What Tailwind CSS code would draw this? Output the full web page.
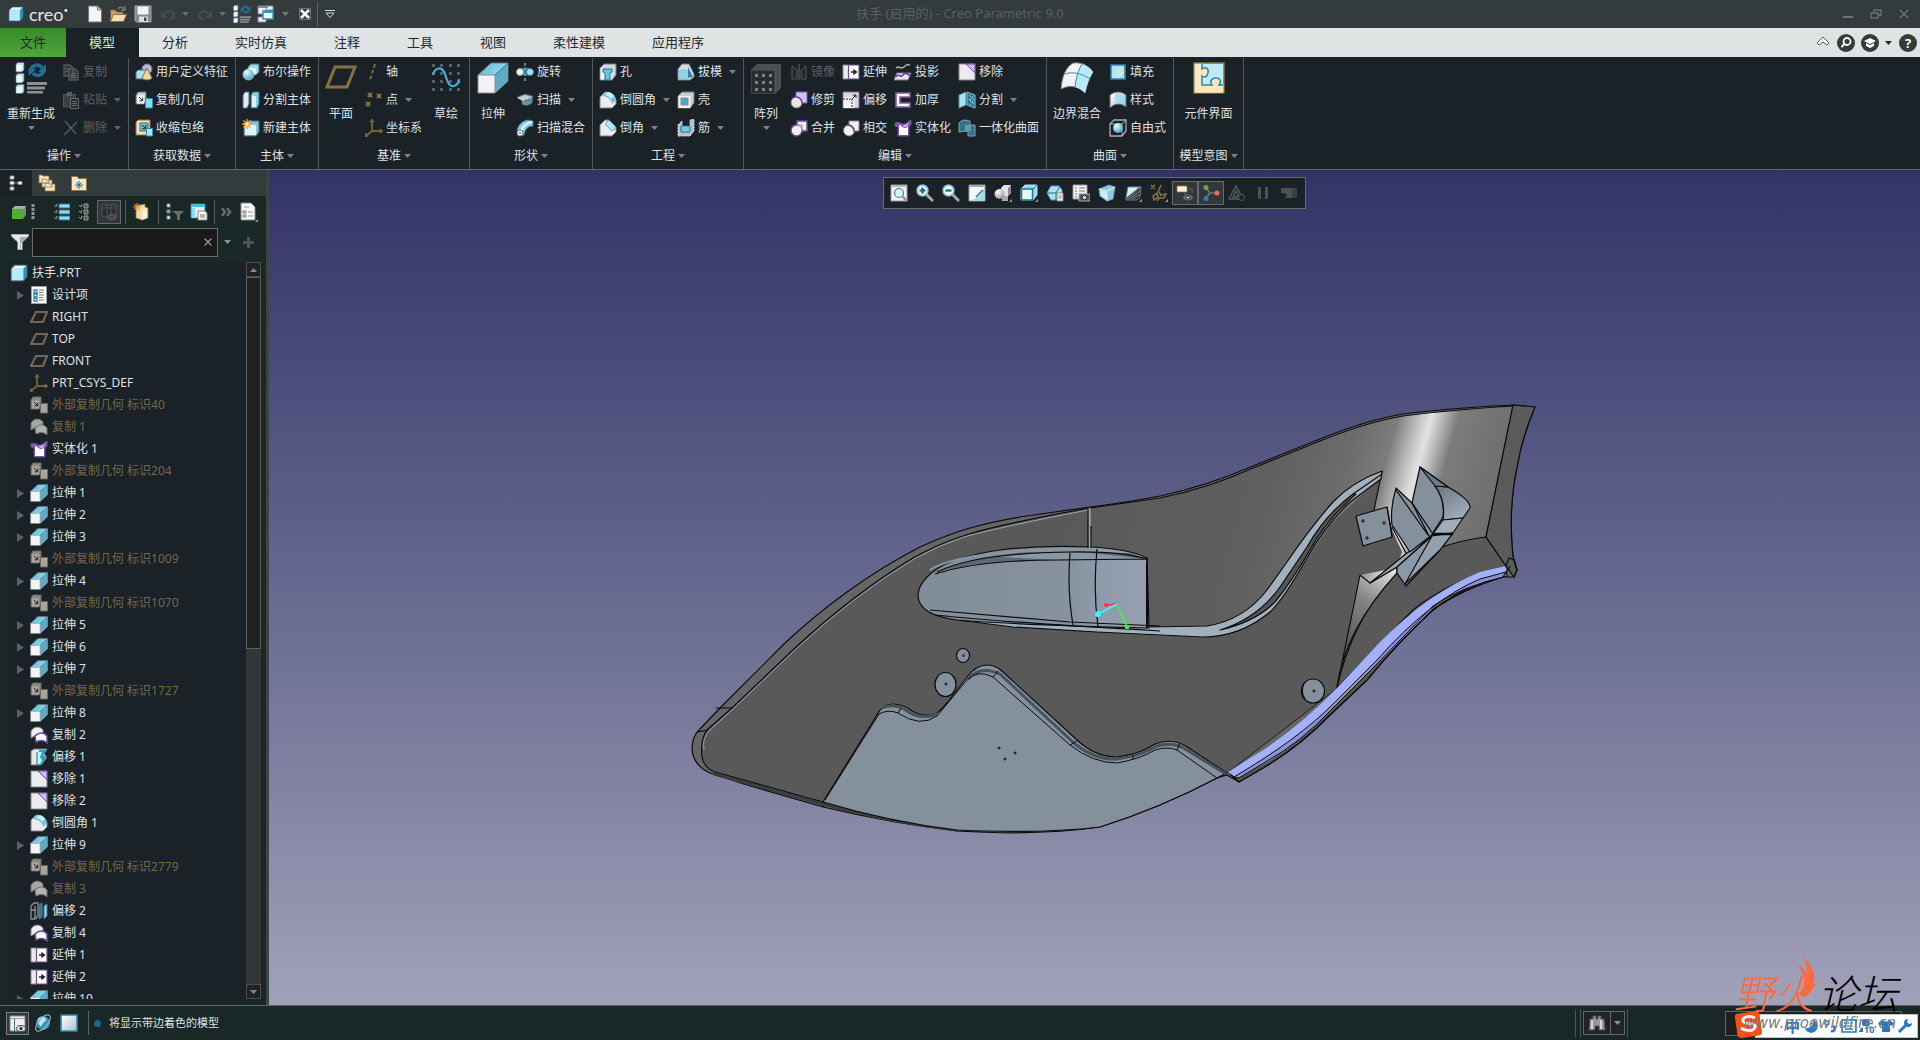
<!DOCTYPE html>
<html lang="zh-CN">
<head>
<meta charset="utf-8">
<meta name="viewport" content="width=device-width, initial-scale=1">
<title>扶手 (启用的) - Creo Parametric 9.0</title>
<script src="https://cdn.jsdelivr.net/npm/@tailwindcss/browser@4"></script>
</head>
<body class="flex h-screen flex-col overflow-hidden bg-[#192827] font-['Noto_Sans','Noto_Sans_CJK_SC',sans-serif] text-xs text-[#dfe2e3]">

<!-- Icon library -->
<svg class="absolute size-0" aria-hidden="true">
  <defs>
    <linearGradient id="gb" x1="0" y1="0" x2="1" y2="1"><stop offset="0" stop-color="#4db8dc"/><stop offset="1" stop-color="#d4f3fb"/></linearGradient>
    <linearGradient id="gw" x1="0" y1="0" x2="1" y2="1"><stop offset="0" stop-color="#fff"/><stop offset="1" stop-color="#a9c3cc"/></linearGradient>
    <radialGradient id="gs" cx=".35" cy=".3" r=".8"><stop offset="0" stop-color="#fff"/><stop offset="1" stop-color="#909090"/></radialGradient>
    <radialGradient id="gsb" cx=".35" cy=".3" r=".8"><stop offset="0" stop-color="#e8fbff"/><stop offset="1" stop-color="#3a9cc0"/></radialGradient>
  </defs>
  <symbol id="dn" viewBox="0 0 7 4"><path d="M0 0h7L3.500 4z" fill="currentColor"/></symbol>
  <symbol id="rt" viewBox="0 0 8 9"><path d="M1 0l7 4.500L1 9z" fill="currentColor"/></symbol>
  <symbol id="cube" viewBox="0 0 16 16"><path d="M1 4l3-3h11v10l-3 4H1z" fill="#8ed9f0" stroke="#4a5358"/><path d="M1.500 4.500h10v10h-10z" fill="#b5ecfb"/><path d="M12 4l3-3v10l-3 3.500z" fill="#2f8fb8"/><path d="M2 4l2.500-2.500H14L11.500 4z" fill="#e6fafe"/></symbol>
  <symbol id="new" viewBox="0 0 16 18"><path d="M1.500 1h9l4 4v12h-13z" fill="#f4f4f4" stroke="#777"/><path d="M10.500 1v4h4z" fill="#c9cdd0" stroke="#777"/></symbol>
  <symbol id="open" viewBox="0 0 18 18"><path d="M1.500 16V5h5l1.500 2h6v3" fill="#c6a067" stroke="#6e5a3c"/><path d="M1.500 16.500l3-7h13l-3 7z" fill="#f5dfae" stroke="#8c7448"/><path d="M9 4c2-3 5-2 5.500 0m1.500-3v4h-4" fill="none" stroke="#777" stroke-width="1.500"/></symbol>
  <symbol id="save" viewBox="0 0 18 18"><path d="M1 1h16v16H2.500L1 15.500z" fill="#85898c" stroke="#a4a7a9"/><path d="M3.500 1.500h11v8h-11z" fill="#f4f4f4"/><path d="M5 11.500h9V17H5z" fill="#d7e3e7"/><path d="M10 12.500h2.500V16H10z" fill="#40494e"/></symbol>
  <symbol id="undo" viewBox="0 0 16 16"><path d="M4 8c3-4 10-3 10 1 0 3-2 4-5 5" fill="none" stroke="currentColor" stroke-width="2.200"/><path d="M1 4v8h7z" fill="currentColor"/></symbol>
  <symbol id="regen" viewBox="0 0 32 32"><g fill="#bfe9f6" stroke="#5f6a70" stroke-width=".8"><path d="M1 2l2-1.500h6V8l-2 2H1zM1 13l2-1.500h6V19l-2 2H1zM1 24l2-1.500h6V30l-2 1.500H1z"/></g><path d="M1.500 3h5v6h-5zM1.500 14h5v6h-5zM1.500 25h5v6h-5z" fill="#f1fcff"/><g fill="none" stroke="#1f6f96" stroke-width="3.500"><path d="M16 8c1-5 8-7 11-2M29 8c-1 6-8 7-11 3"/></g><path d="M31 2v8h-8zM13.500 14V7h8z" fill="#1f6f96"/><path d="M12 20h20v3H12zM12 24.500h18v3H12zM12 29h16v2.500H12z" fill="#8c9093"/></symbol>
  <symbol id="wins" viewBox="0 0 18 18"><path d="M1 1h10v8H1zM7 12H1v5h8v-5" fill="#eef2f3" stroke="#888"/><path d="M9 1h7v4H9z" fill="#eee" stroke="#888"/><path d="M1 1h10v2H1z" fill="#888"/><path d="M6 6h10v8H6z" fill="#e9f9fd" stroke="#3a93b8" stroke-width="1.500"/><path d="M6 5.500h10V8H6z" fill="#3a93b8"/></symbol>
  <symbol id="copy" viewBox="0 0 18 18"><path d="M2 2h6l3 3v8H2zM7 6h6l3 3v8H7z" fill="#33393d" stroke="#54595c" stroke-width="1.300"/><path d="M3.500 6H7M3.500 8.500H6M9 10.500h5M9 12.500h5M9 14.500h5" stroke="#64696c"/></symbol>
  <symbol id="paste" viewBox="0 0 18 18"><path d="M1.500 3.500h12V16h-12z" fill="#3a3f42" stroke="#54595c"/><path d="M5 1h5v4H5z" fill="#5b6063"/><path d="M8.500 7.500h8v10h-8z" fill="#252b2f" stroke="#64696c"/><path d="M10 10.500h5M10 12.500h5M10 14.500h5" stroke="#64696c"/></symbol>
  <symbol id="del" viewBox="0 0 18 18"><path d="M3 2l11 13M15 3L2 16" stroke="#54595c" stroke-width="1.600"/></symbol>
  <symbol id="udf" viewBox="0 0 18 18"><circle cx="12" cy="6" r="5" fill="#b9b6ee" stroke="#777"/><path d="M1 9l2-2h8v7l-2 2H1z" fill="#a5e2f5" stroke="#567"/><path d="M12 5l5 10c-2 2.500-8 2.500-10 0z" fill="#f0d79d" stroke="#86704a"/></symbol>
  <symbol id="cgeo" viewBox="0 0 18 18"><path d="M1 4l2-3h8v9l-2 3H1z" fill="#cfd6d9" stroke="#60686c"/><path d="M2 4.500h7v8H2z" fill="#fff"/><path d="M4 6l3.500 3.500M7.700 6.500v3.300H4.500" stroke="#222" fill="none"/><path d="M10.500 7.500h7v9.500h-7z" fill="#8adaf3" stroke="#3b8aa8"/></symbol>
  <symbol id="cgeod" viewBox="0 0 18 18"><path d="M1 4l2-3h8v9l-2 3H1z" fill="#8d8a83" stroke="#6b6963"/><path d="M2 4.500h7v8H2z" fill="#a9a69e"/><path d="M4 6l3.500 3.500M7.700 6.500v3.300H4.500" stroke="#222" fill="none"/><path d="M10.500 7.500h7v9.500h-7z" fill="#aaa49a" stroke="#6b6963"/></symbol>
  <symbol id="wrap" viewBox="0 0 18 18"><path d="M1 3l2-2h12v11l-3 4H1z" fill="#f7dfae" stroke="#8c7448"/><path d="M5 4h8v8H5z" fill="#75c4de" stroke="#3b6a80"/><path d="M7 6l3.500 3.500M10.700 6v3.800H7" stroke="#122" fill="none"/><path d="M11.500 9.500h6V17h-6z" fill="#a4e6fa" stroke="#3b8aa8"/></symbol>
  <symbol id="bool" viewBox="0 0 18 18"><path d="M6 4l3-3h8v8l-3 3H6z" fill="#9adcf1" stroke="#567"/><path d="M7 5h7v6H7z" fill="#e6f9fe"/><circle cx="6.500" cy="11.500" r="5.500" fill="url(#gsb)" stroke="#c7e9f2" stroke-width=".6"/></symbol>
  <symbol id="split" viewBox="0 0 18 18"><path d="M1 4l2-3h4v12l-2 4H1z" fill="#d9eef4" stroke="#667"/><path d="M9 4l2-3h6v12l-2 4H9z" fill="#84d3ec" stroke="#567"/><path d="M10 5h4v11h-4z" fill="#d4f5fd"/></symbol>
  <symbol id="newb" viewBox="0 0 18 18"><path d="M2 5l3-3h12v11l-3 4H2z" fill="#7ec9e2" stroke="#567"/><path d="M3 6h11v10H3z" fill="#d9f4fb"/><path d="M5 0v10M0 5h10M1.500 1.500l7 7M8.500 1.500l-7 7" stroke="#f59a22" stroke-width="1.300"/><circle cx="5" cy="5" r="1.800" fill="#fff3a6"/></symbol>
  <symbol id="plane" viewBox="0 0 32 26"><path d="M10 2h20l-8 20H2z" fill="none" stroke="#8b6f42" stroke-width="3"/></symbol>
  <symbol id="axis" viewBox="0 0 18 18"><path d="M10 1L5 17" stroke="#7b6138" stroke-width="2.200" stroke-dasharray="4 2"/></symbol>
  <symbol id="pnt" viewBox="0 0 18 18"><path d="M3 2l4 4m0-4L3 6M12 3l4 4m0-4l-4 4M1 11l4 4m0-4l-4 4" stroke="#8b6f42" stroke-width="2.200"/></symbol>
  <symbol id="csys" viewBox="0 0 18 18"><path d="M7 2v10h9M7 12l-5 4" fill="none" stroke="#7b6138" stroke-width="1.800"/><path d="M5 3h4L7 0zM15 10v4l3-2zM0 14l3 3-3 1z" fill="#7b6138" stroke="#7b6138"/></symbol>
  <symbol id="sketch" viewBox="0 0 28 28"><g fill="#565c60"><path d="M0 0h3v3H0zM8 0h3v3H8zM17 0h3v3h-3zM25 0h3v3h-3zM0 8h3v3H0zM8 8h3v3H8zM17 8h3v3h-3zM25 8h3v3h-3zM0 16h3v3H0zM8 16h3v3H8zM17 16h3v3h-3zM25 16h3v3h-3zM0 24h3v3H0zM8 24h3v3H8zM17 24h3v3h-3zM25 24h3v3h-3z"/></g><path d="M1 11C3 3 10 2 13 10c3 10 5 13 9 12 3-1 5-3 5.500-7" fill="none" stroke="#3fb0de" stroke-width="2.200"/></symbol>
  <symbol id="extr" viewBox="0 0 32 32"><path d="M1 13L14 1h17v18L18 31z" fill="url(#gb)" stroke="#6d7377"/><path d="M18 13L31 1v18L18 31z" fill="#62a9c4"/><path d="M18 13L31 1" stroke="#2a7795"/><path d="M1 13h17v18H1z" fill="#f3f3f3" stroke="#8a8f92"/></symbol>
  <symbol id="rev" viewBox="0 0 18 18"><path d="M5 6C8 4 12 4 16 7l-1 4c-2 2-7 2-10 0z" fill="#3186aa"/><circle cx="4" cy="9" r="3.500" fill="#f4f4f4" stroke="#999"/><circle cx="14" cy="9" r="3.500" fill="#a8e2f4" stroke="#488"/><path d="M9 0v3m0 2v2m0 4v2m0 2v3" stroke="#8b9194" stroke-width="1.600"/></symbol>
  <symbol id="swp" viewBox="0 0 18 18"><path d="M1 6l8-3 8 2-1 7c-4 3-7 3-10 1V9z" fill="#8b979c" stroke="#50585c"/><path d="M1 7l8-3 7 2-9 4z" fill="#c7cfd2"/><path d="M8 9l8-2v4l-7 2z" fill="#4d93ad"/></symbol>
  <symbol id="swb" viewBox="0 0 18 18"><path d="M1 12C2 6 6 2 12 1l5 1v5c-5 0-8 3-9 9l-5 1z" fill="#84d0e8" stroke="#507a8a"/><path d="M6 11c1-5 5-7 10-8" stroke="#e6fafe" stroke-width="2" fill="none"/><circle cx="4" cy="14" r="3" fill="#f4f4f4" stroke="#777"/><circle cx="4" cy="14" r="1" fill="#777"/></symbol>
  <symbol id="hole" viewBox="0 0 18 18"><path d="M1 5l4-4h12v11l-4 5H1z" fill="#d5dadc" stroke="#737a7e"/><path d="M1.500 5.500h11v11h-11z" fill="#f2f2f2"/><path d="M4 6h9v3l-2 1v7H6v-7L4 9z" fill="#6cc4e0" stroke="#1f7296"/></symbol>
  <symbol id="rnd" viewBox="0 0 18 18"><path d="M1 6l5-5c6 0 10 3 11 8v4l-4 4H1z" fill="#ececec" stroke="#7a8084"/><path d="M3 5l4-4c5 0 9 3 10 8l-4 4C13 9 8 5 3 5z" fill="#6ac5e4"/><path d="M6 4l3-3c3 .5 5 2 6 4l-3 3C11 6 8.500 4.500 6 4z" fill="#c5f1fc"/></symbol>
  <symbol id="chf" viewBox="0 0 18 18"><path d="M1 6l5-5h4l7 7v5l-4 4H1z" fill="#ececec" stroke="#7a8084"/><path d="M6 5l4-4 7 7-4 4z" fill="#a9e9fb" stroke="#3a8eae" stroke-width=".8"/></symbol>
  <symbol id="draft" viewBox="0 0 18 18"><path d="M1 6l4-5h7l5 10v3l-4 3H1z" fill="#d9dee0" stroke="#737a7e"/><path d="M1.500 6.500H11V16H1.500z" fill="#8fd2e6"/><path d="M11 4l5 10-5 1z" fill="#2f88ac"/></symbol>
  <symbol id="shell" viewBox="0 0 18 18"><path d="M1 5l4-4h12v11l-4 5H1z" fill="#c9ced0" stroke="#737a7e"/><path d="M1.500 5h12v12h-12z" fill="#f1f1f1"/><path d="M4 7h7v7H4z" fill="#4ca7c9" stroke="#888"/></symbol>
  <symbol id="rib" viewBox="0 0 18 18"><path d="M1 6l4-4v8h8V1l4-1v12l-4 5H1z" fill="#b7c0c4" stroke="#d7dddf" stroke-dasharray="2 1"/><path d="M4 7h9v6H4z" fill="#74cbe6" stroke="#1f7296"/></symbol>
  <symbol id="patt" viewBox="0 0 30 30"><path d="M0 6l6-6h24v24l-6 6H0z" fill="#4b4f52"/><path d="M0 6h24v24H0z" fill="#2a2d30" stroke="#55595c"/><path d="M4 10h3v3H4zM11 10h3v3h-3zM18 10h3v3h-3zM4 17h3v3H4zM11 17h3v3h-3zM18 17h3v3h-3zM4 24h3v3H4zM11 24h3v3h-3zM18 24h3v3h-3z" fill="#7d8184"/></symbol>
  <symbol id="mirr" viewBox="0 0 18 18"><path d="M2 3l5 4v9H2zM16 3l-5 4v9h5z" fill="#26292c" stroke="#53585b"/><path d="M9 1v16" stroke="#666"/></symbol>
  <symbol id="trim" viewBox="0 0 18 18"><path d="M6 1h11v11H6z" fill="#cfc2ef" stroke="#7b5fa8"/><circle cx="6.500" cy="11.500" r="5.500" fill="#e6e6e6" stroke="#777"/><path d="M6 6a6 6 0 016 6" fill="none" stroke="#7b2fd0" stroke-width="1.500"/></symbol>
  <symbol id="merge" viewBox="0 0 18 18"><path d="M7 2h10v10h-5a5.500 5.500 0 11-5-6z" fill="#f1f1f1" stroke="#6d4aa0" stroke-width="1.500"/><path d="M6 6h6v6M7 6a6 6 0 015 6" fill="none" stroke="#888"/></symbol>
  <symbol id="inter" viewBox="0 0 18 18"><path d="M7 2h10v10H7z" fill="#f1f1f1" stroke="#888"/><circle cx="7" cy="11.500" r="5.500" fill="#f4f4f4" stroke="#777"/><path d="M5 6a6.500 6.500 0 017 7" fill="none" stroke="#6d4aa0" stroke-width="1.700"/></symbol>
  <symbol id="ext" viewBox="0 0 18 18"><path d="M1 2h6v14H1z" fill="#e9e9ee" stroke="#888"/><path d="M6.500 2H17v14H6.500z" fill="#fff" stroke="#6d4aa0" stroke-width="1.200"/><path d="M9 9h4M12 7v4l2.500-2z" fill="#222" stroke="#222" stroke-width="1.300"/></symbol>
  <symbol id="ofs" viewBox="0 0 18 18"><path d="M1 1h16v16H1z" fill="#dcd3ef" stroke="#777"/><path d="M1.500 6h11v11h-11z" fill="#f5f5f5"/><path d="M1 8h9v9" fill="none" stroke="#222" stroke-dasharray="2 1"/><path d="M10 8l4-4m0 3V4h-3" fill="none" stroke="#222"/></symbol>
  <symbol id="proj" viewBox="0 0 18 18"><path d="M2 5c3-3 5 2 8-1 2-2 3-3 6-2" fill="none" stroke="#aaa" stroke-width="1.600"/><path d="M3 10h14l-3 7H0z" fill="#e9e5f2" stroke="#777"/><path d="M2 14c3-5 5 2 7-2 3-4 4 0 7 0" fill="none" stroke="#6c2fb5" stroke-width="1.600"/></symbol>
  <symbol id="thick" viewBox="0 0 18 18"><path d="M2 2h14v4H6v6h10v4H2z" fill="#f4f4f4" stroke="#7f5fa4" stroke-width="1.600"/></symbol>
  <symbol id="solid" viewBox="0 0 18 18"><path d="M1 4c3-2 6 1 9 1s4-3 7-4v5l-2 2v9H4V8L1 7z" fill="#7d5cb3" stroke="#6d4aa0"/><path d="M5 6c3 0 3 3 6 3 2 0 2-1 3-2v9H5z" fill="#fff"/><path d="M9 6c3 0 4-1 6-3-1 3-2 5-4 5-1 0-2-1-2-2z" fill="#cbbce8"/></symbol>
  <symbol id="rem" viewBox="0 0 18 18"><path d="M1 1h16v16H1z" fill="#ececf0" stroke="#888"/><path d="M8 1h9v9z" fill="#cdbdf3" stroke="#6d4aa0"/></symbol>
  <symbol id="spl2" viewBox="0 0 18 18"><path d="M1 4l7-3v13l-7 3z" fill="#a9e3f4" stroke="#688"/><path d="M9 1l8 3v13l-8-3z" fill="#237ba0" stroke="#8bc"/><path d="M11 4l5 5M11 8l5 5M15 5l-4 5M15 10l-3 4" stroke="#bfeefa" stroke-dasharray="1 1"/></symbol>
  <symbol id="uni" viewBox="0 0 18 18"><path d="M1 4c3-4 7-3 11-2v4h5v11h-7v-5L1 13z" fill="#35728c" stroke="#7aa4b3"/><path d="M7 6h6v6H7z" fill="#7bb7cd" opacity=".6"/></symbol>
  <symbol id="bnd" viewBox="0 0 34 32"><path d="M1 27C2 14 6 5 13 1c8-1 15 2 20 9-4 6-6 13-8 21-6-6-14-9-24-4z" fill="#f2f4f5" stroke="#777"/><path d="M22 2c5 2 8 4 11 8-4 6-6 13-8 21-3-3-6-5-10-6 1-8 3-16 7-23" fill="#b9eaf8"/><path d="M22 2c-4 6-6 14-7 23M5 12c8-3 18 0 25 5" fill="none" stroke="#3b8aa8"/></symbol>
  <symbol id="fill" viewBox="0 0 18 18"><path d="M2 2h14v14H2z" fill="#aee5f5" stroke="#2c86ab" stroke-width="1.600"/><path d="M4 12l8-8M4 15L15 4M8 15l7-7" stroke="#fff"/></symbol>
  <symbol id="style" viewBox="0 0 18 18"><path d="M1 4c5-4 11-4 16 0v12c-5-4-11-4-16 1z" fill="url(#gw)" stroke="#667"/><path d="M6 3c4-1 7 0 10 2v9c-3-2-6-2-10-2z" fill="#90dbf1" opacity=".7"/></symbol>
  <symbol id="free" viewBox="0 0 18 18"><path d="M1 5l4-4h12v11l-4 5H1z" fill="none" stroke="#aaa" stroke-width="1.300"/><path d="M1 5h12v12M13 5l4-4" fill="none" stroke="#aaa"/><circle cx="9" cy="9" r="5" fill="url(#gsb)"/></symbol>
  <symbol id="comp" viewBox="0 0 32 32"><path d="M1 1h30v30H1z" fill="#bfeaf6" stroke="#8b6f42" stroke-width="1.500"/><path d="M1.700 1.700H9v5c4-3 7 0 6 4s-3 5-6 3v9h10c-3-4 0-7 4-7s6 3 3 7h4.300v8H1.700z" fill="#fbe6c0"/><path d="M9 2v5c4-3 7 0 6 4s-3 5-6 3v9h10c-3-4 0-7 4-7s6 3 3 7h4" fill="none" stroke="#2c86ab" stroke-width="1.500"/></symbol>
  <symbol id="quilt" viewBox="0 0 18 18"><path d="M1 5c3-5 9-5 12-1v5H6L1 12z" fill="#f0f0f4" stroke="#888"/><path d="M5 10c4-4 9-4 12 0v7c-3-3-7-3-11-1z" fill="#fff" stroke="#6d4aa0" stroke-width="1.500"/></symbol>
  <symbol id="quiltd" viewBox="0 0 18 18"><path d="M1 5c3-5 9-5 12-1v5H6L1 12z" fill="#a5a5a3" stroke="#6f6f6d"/><path d="M5 10c4-4 9-4 12 0v7c-3-3-7-3-11-1z" fill="#b1b1af" stroke="#6f6f6d"/></symbol>
  <symbol id="ofs1" viewBox="0 0 18 18"><path d="M1 3l3-2h13l-3 5c3 2 3 5 0 7l-3 4H1z" fill="#e6e9ea" stroke="#777"/><path d="M9 2h8l-4 5c4 1 4 5 0 6l-2 4H8z" fill="#2f9fc8"/><path d="M7 4h5l-2 5 2 3-2 4H7z" fill="#c7f1fc"/><path d="M7 4v13" stroke="#1f6f96"/></symbol>
  <symbol id="ofs2" viewBox="0 0 18 18"><path d="M1 4l3-3h4v13l-3 3H1zM5 4v13M1 8h5" fill="none" stroke="#8a9093" stroke-width="1.300"/><path d="M9 3l3-2v14l-3 2z" fill="#1f7ea8" stroke="#678"/><path d="M14 4l3-2v12l-3 3z" fill="#8ed9f0" stroke="#478"/></symbol>
  <symbol id="items" viewBox="0 0 16 18"><path d="M.5.500h15v17H.5z" fill="#fafafa" stroke="#9a9fa2"/><path d="M3 4h3v3H3zM3 8h3v3H3zM3 12h3v3H3z" fill="none" stroke="#2c86ab" stroke-width="1.300"/><path d="M8 4h5M8 6.500h4M8 9h5M8 11.500h4M8 14h5" stroke="#777"/></symbol>
  <symbol id="planes" viewBox="0 0 18 18"><path d="M6 4h11l-4 10H1z" fill="none" stroke="#766454" stroke-width="2.200"/></symbol>
  <symbol id="bino" viewBox="0 0 18 18"><path d="M2 5h3V2h3v3h2V2h3v3h3l1 11h-6v-4H7v4H1z" fill="#989898" stroke="#555"/><path d="M3 6h2v9H3zM12 6h2v9h-2z" fill="#d7d7d7"/></symbol>
</svg>

<!-- Title bar -->
<header class="grid h-7 shrink-0 grid-cols-[1fr_auto_1fr] items-center bg-[#343b3d]">
  <div class="flex h-full items-center">
    <svg class="ml-2 size-4"><use href="#cube"/></svg>
    <span class="ml-[5px] flex w-[58px] font-['Lato',sans-serif] text-lg leading-6 text-[#e3e6e7]">creo<span class="text-[8px] leading-4">•</span></span>
    <button aria-label="新建"><svg class="h-[18px] w-4"><use href="#new"/></svg></button>
    <button aria-label="打开" class="ml-[6px]"><svg class="size-[18px]"><use href="#open"/></svg></button>
    <button aria-label="保存" class="ml-[7px]"><svg class="size-[18px]"><use href="#save"/></svg></button>
    <button aria-label="撤消" class="ml-2 flex items-center gap-[6px] text-[#464d4f]"><svg class="size-4"><use href="#undo"/></svg><svg class="h-1 w-[7px] text-[#686e71]"><use href="#dn"/></svg></button>
    <button aria-label="重做" class="ml-2 flex items-center gap-[6px] text-[#464d4f]"><svg class="size-4 -scale-x-100"><use href="#undo"/></svg><svg class="h-1 w-[7px] text-[#686e71]"><use href="#dn"/></svg></button>
    <button aria-label="重新生成" class="ml-[7px]"><svg class="size-[18px]"><use href="#regen"/></svg></button>
    <button aria-label="窗口" class="ml-[6px] flex items-center gap-[7px]"><svg class="size-[18px]"><use href="#wins"/></svg><svg class="h-1 w-[7px] text-[#73797c]"><use href="#dn"/></svg></button>
    <button aria-label="关闭窗口" class="ml-[9px]"><svg class="size-[14px]" viewBox="0 0 14 14"><path d="M1.500 1.500h11v11h-11z" fill="none" stroke="#6d7376"/><path d="M3 3l8 8M11 3l-8 8" stroke="#fff" stroke-width="2.500"/></svg></button>
    <span class="ml-[5px] h-6 w-px bg-[#5b6264]"></span>
    <button aria-label="自定义快速访问工具栏" class="ml-[7px]"><svg class="h-[9px] w-[10px]" viewBox="0 0 10 9"><path d="M0 .500h10M1 3h8L5 7.500z" fill="none" stroke="#d5d8d9"/></svg></button>
  </div>
  <h1 class="text-[13px] text-[#585f61]">扶手 (启用的) - Creo Parametric 9.0</h1>
  <div class="flex items-center justify-end gap-4 pr-[10px] text-[#6b7173]">
    <button aria-label="最小化"><svg class="size-3" viewBox="0 0 12 12"><path d="M1 9h10" stroke="currentColor" stroke-width="2"/></svg></button>
    <button aria-label="还原"><svg class="size-3" viewBox="0 0 12 12"><path d="M1 5h7v5H1zM4 4V2h7v5H8" fill="none" stroke="currentColor" stroke-width="1.300"/></svg></button>
    <button aria-label="关闭"><svg class="size-3" viewBox="0 0 12 12"><path d="M2 2l8 8M10 2l-8 8" stroke="currentColor" stroke-width="1.600"/></svg></button>
  </div>
</header>

<!-- Ribbon tabs -->
<nav class="flex h-[29px] shrink-0 bg-[#dfe3e4] text-[13px] text-[#23282b] [&>button]:pr-6 [&>button]:pl-[23px]">
  <div class="flex w-[66px] bg-linear-to-b from-[#3a8a2b] to-[#4fa53a]"><button class="w-full">文件</button></div>
  <button class="bg-[#1a2127] text-[#c9eebc]">模型</button>
  <button>分析</button><button>实时仿真</button><button>注释</button><button>工具</button><button>视图</button><button>柔性建模</button><button>应用程序</button>
  <div class="ml-auto flex items-center pr-[3px]">
    <button aria-label="最小化功能区" class="mr-[6px] mb-1"><svg class="h-3 w-[15px]" viewBox="0 0 15 12"><path d="M1 8l6-6 6 6-2 2-4-3-4 3z" fill="#fff" stroke="#555"/></svg></button>
    <button aria-label="搜索" class="mr-[6px]"><svg class="size-[18px]" viewBox="0 0 18 18"><circle cx="9" cy="9" r="9" fill="#343b3d"/><circle cx="10" cy="7.500" r="3.500" fill="none" stroke="#fff" stroke-width="1.800"/><path d="M7.500 10L4.500 13" stroke="#fff" stroke-width="2"/></svg></button>
    <button aria-label="学习" class="mr-[6px] flex items-center gap-[6px]"><svg class="size-[18px]" viewBox="0 0 18 18"><circle cx="9" cy="9" r="9" fill="#343b3d"/><path d="M9 4l6 3-6 3-6-3zM5 9l4 2 4-2v3l-4 2-4-2z" fill="#fff"/></svg><svg class="h-1 w-[7px]"><use href="#dn"/></svg></button>
    <button aria-label="帮助" class="ml-px size-[18px] rounded-full bg-[#343b3d] text-[13px] leading-[18px] font-bold text-white">?</button>
  </div>
</nav>

<!-- Ribbon -->
<div class="flex h-[113px] shrink-0 border-b border-[#5f6668] bg-[#1a2127] pt-px whitespace-nowrap [&_h2]:flex [&_h2]:h-7 [&_h2]:items-center [&_h2]:justify-center [&_h2]:gap-[3px] [&_h2]:text-[#dfe2e3] [&_h2_svg]:text-[#7d8386] [&>section]:border-r [&>section]:border-[#53595c]">
  <section class="w-[129px]">
    <div class="flex h-21">
      <button class="ml-[7px] flex w-12 flex-col items-center pt-1"><svg class="size-8"><use href="#regen"/></svg><span class="mt-2 leading-6">重新生成</span><svg class="h-1 w-[7px] text-[#7d8386]"><use href="#dn"/></svg></button>
      <div class="ml-[7px] text-[#5a6063] [&>button]:flex [&>button]:h-7 [&>button]:items-center [&>button]:gap-[3px]">
        <button><svg class="size-[18px]"><use href="#copy"/></svg>复制</button>
        <button><svg class="size-[18px]"><use href="#paste"/></svg>粘贴<svg class="ml-1 h-1 w-[7px]"><use href="#dn"/></svg></button>
        <button><svg class="size-[18px]"><use href="#del"/></svg>删除<svg class="ml-1 h-1 w-[7px]"><use href="#dn"/></svg></button>
      </div>
    </div>
    <h2>操作<svg class="h-1 w-[7px]"><use href="#dn"/></svg></h2>
  </section>
  <section class="w-[107px]">
    <div class="ml-[6px] [&>button]:flex [&>button]:h-7 [&>button]:items-center [&>button]:gap-[3px]">
      <button><svg class="size-[18px]"><use href="#udf"/></svg>用户定义特征</button>
      <button><svg class="size-[18px]"><use href="#cgeo"/></svg>复制几何</button>
      <button><svg class="size-[18px]"><use href="#wrap"/></svg>收缩包络</button>
    </div>
    <h2>获取数据<svg class="h-1 w-[7px]"><use href="#dn"/></svg></h2>
  </section>
  <section class="w-[83px]">
    <div class="ml-[6px] [&>button]:flex [&>button]:h-7 [&>button]:items-center [&>button]:gap-[3px]">
      <button><svg class="size-[18px]"><use href="#bool"/></svg>布尔操作</button>
      <button><svg class="size-[18px]"><use href="#split"/></svg>分割主体</button>
      <button><svg class="size-[18px]"><use href="#newb"/></svg>新建主体</button>
    </div>
    <h2>主体<svg class="h-1 w-[7px]"><use href="#dn"/></svg></h2>
  </section>
  <section class="w-[151px]">
    <div class="flex h-21">
      <button class="ml-[6px] flex w-8 flex-col items-center pt-1"><svg class="h-8 w-8"><use href="#plane"/></svg><span class="mt-2 leading-6">平面</span></button>
      <div class="ml-2 [&>button]:flex [&>button]:h-7 [&>button]:items-center [&>button]:gap-[3px]">
        <button><svg class="size-[18px]"><use href="#axis"/></svg>轴</button>
        <button><svg class="size-[18px]"><use href="#pnt"/></svg>点<svg class="ml-1 h-1 w-[7px] text-[#7d8386]"><use href="#dn"/></svg></button>
        <button><svg class="size-[18px]"><use href="#csys"/></svg>坐标系</button>
      </div>
      <button class="ml-2 flex w-8 flex-col items-center pt-[6px]"><svg class="size-7"><use href="#sketch"/></svg><span class="mt-[10px] leading-6">草绘</span></button>
    </div>
    <h2>基准<svg class="h-1 w-[7px]"><use href="#dn"/></svg></h2>
  </section>
  <section class="w-[123px]">
    <div class="flex h-21">
      <button class="ml-[7px] flex w-8 flex-col items-center pt-1"><svg class="size-8"><use href="#extr"/></svg><span class="mt-2 leading-6">拉伸</span></button>
      <div class="ml-[7px] [&>button]:flex [&>button]:h-7 [&>button]:items-center [&>button]:gap-[3px]">
        <button><svg class="size-[18px]"><use href="#rev"/></svg>旋转</button>
        <button><svg class="size-[18px]"><use href="#swp"/></svg>扫描<svg class="ml-1 h-1 w-[7px] text-[#7d8386]"><use href="#dn"/></svg></button>
        <button><svg class="size-[18px]"><use href="#swb"/></svg>扫描混合</button>
      </div>
    </div>
    <h2>形状<svg class="h-1 w-[7px]"><use href="#dn"/></svg></h2>
  </section>
  <section class="w-[151px]">
    <div class="flex h-21">
      <div class="ml-[6px] w-[78px] [&>button]:flex [&>button]:h-7 [&>button]:items-center [&>button]:gap-[3px]">
        <button><svg class="size-[18px]"><use href="#hole"/></svg>孔</button>
        <button><svg class="size-[18px]"><use href="#rnd"/></svg>倒圆角<svg class="ml-1 h-1 w-[7px] text-[#7d8386]"><use href="#dn"/></svg></button>
        <button><svg class="size-[18px]"><use href="#chf"/></svg>倒角<svg class="ml-1 h-1 w-[7px] text-[#7d8386]"><use href="#dn"/></svg></button>
      </div>
      <div class="[&>button]:flex [&>button]:h-7 [&>button]:items-center [&>button]:gap-[3px]">
        <button><svg class="size-[18px]"><use href="#draft"/></svg>拔模<svg class="ml-1 h-1 w-[7px] text-[#7d8386]"><use href="#dn"/></svg></button>
        <button><svg class="size-[18px]"><use href="#shell"/></svg>壳</button>
        <button><svg class="size-[18px]"><use href="#rib"/></svg>筋<svg class="ml-1 h-1 w-[7px] text-[#7d8386]"><use href="#dn"/></svg></button>
      </div>
    </div>
    <h2>工程<svg class="h-1 w-[7px]"><use href="#dn"/></svg></h2>
  </section>
  <section class="w-[303px]">
    <div class="flex h-21">
      <button class="ml-[6px] flex w-8 flex-col items-center pt-[6px]"><svg class="size-[30px]"><use href="#patt"/></svg><span class="mt-2 leading-6">阵列</span><svg class="h-1 w-[7px] text-[#7d8386]"><use href="#dn"/></svg></button>
      <div class="ml-2 w-[52px] [&>button]:flex [&>button]:h-7 [&>button]:items-center [&>button]:gap-[3px]">
        <button class="text-[#5a6063]"><svg class="size-[18px]"><use href="#mirr"/></svg>镜像</button>
        <button><svg class="size-[18px]"><use href="#trim"/></svg>修剪</button>
        <button><svg class="size-[18px]"><use href="#merge"/></svg>合并</button>
      </div>
      <div class="w-[52px] [&>button]:flex [&>button]:h-7 [&>button]:items-center [&>button]:gap-[3px]">
        <button><svg class="size-[18px]"><use href="#ext"/></svg>延伸</button>
        <button><svg class="size-[18px]"><use href="#ofs"/></svg>偏移</button>
        <button><svg class="size-[18px]"><use href="#inter"/></svg>相交</button>
      </div>
      <div class="w-16 [&>button]:flex [&>button]:h-7 [&>button]:items-center [&>button]:gap-[3px]">
        <button><svg class="size-[18px]"><use href="#proj"/></svg>投影</button>
        <button><svg class="size-[18px]"><use href="#thick"/></svg>加厚</button>
        <button><svg class="size-[18px]"><use href="#solid"/></svg>实体化</button>
      </div>
      <div class="[&>button]:flex [&>button]:h-7 [&>button]:items-center [&>button]:gap-[3px]">
        <button><svg class="size-[18px]"><use href="#rem"/></svg>移除</button>
        <button><svg class="size-[18px]"><use href="#spl2"/></svg>分割<svg class="ml-1 h-1 w-[7px] text-[#7d8386]"><use href="#dn"/></svg></button>
        <button><svg class="size-[18px]"><use href="#uni"/></svg>一体化曲面</button>
      </div>
    </div>
    <h2>编辑<svg class="h-1 w-[7px]"><use href="#dn"/></svg></h2>
  </section>
  <section class="w-[127px]">
    <div class="flex h-21">
      <button class="ml-[6px] flex w-12 flex-col items-center pt-1"><svg class="h-8 w-[34px]"><use href="#bnd"/></svg><span class="mt-2 leading-6">边界混合</span></button>
      <div class="ml-2 [&>button]:flex [&>button]:h-7 [&>button]:items-center [&>button]:gap-[3px]">
        <button><svg class="size-[18px]"><use href="#fill"/></svg>填充</button>
        <button><svg class="size-[18px]"><use href="#style"/></svg>样式</button>
        <button><svg class="size-[18px]"><use href="#free"/></svg>自由式</button>
      </div>
    </div>
    <h2>曲面<svg class="h-1 w-[7px]"><use href="#dn"/></svg></h2>
  </section>
  <section class="w-[70px]">
    <div class="flex h-21 justify-center">
      <button class="flex w-12 flex-col items-center pt-1"><svg class="size-8"><use href="#comp"/></svg><span class="mt-2 leading-6">元件界面</span></button>
    </div>
    <h2>模型意图<svg class="h-1 w-[7px]"><use href="#dn"/></svg></h2>
  </section>
</div>

<main class="flex min-h-0 flex-1">
  <!-- Model tree navigator -->
  <aside class="flex w-[269px] shrink-0 flex-col border-r-[3px] border-[#3d4446]">
    <div class="flex h-[26px] shrink-0 bg-[#343b3d]">
      <button aria-label="模型树" class="grid w-8 place-items-center bg-[#1a2127]"><svg class="size-4" viewBox="0 0 16 16"><path d="M4 3v10M4 8h7" stroke="#888"/><path d="M2 1h4v3H2zM2 6.500h4v3H2zM2 12h4v3H2zM10 6.500h4v3h-4z" fill="#fff" stroke="#888"/></svg></button>
      <button aria-label="文件夹浏览器" class="grid w-[30px] place-items-center"><svg class="size-[18px]" viewBox="0 0 18 18"><g fill="#fbe6c0" stroke="#8c7448" stroke-width=".8"><path d="M1 1h3l1 1h6v7H1zM4 5h3l1 1h6v7H4zM7 9h3l1 1h6v7H7z"/></g></svg></button>
      <button aria-label="收藏夹" class="grid w-[34px] place-items-center"><svg class="size-4" viewBox="0 0 16 16"><path d="M.5 1.500h6l1 2h8v12H.5z" fill="#fbe6c0" stroke="#8c7448"/><path d="M8 6v8M4 10h8M5.500 7.500l5 5M10.500 7.500l-5 5" stroke="#1f6f96"/></svg></button>
    </div>
    <div class="flex h-[31px] shrink-0 items-center pl-3">
      <button aria-label="显示"><svg class="size-[14px]" viewBox="0 0 14 14"><path d="M0 4l3-3h11v9l-3 4z" fill="#7c8285"/><path d="M0 4h11v10H0z" fill="#4fb02f"/><path d="M0 4l3-3h11l-3 3z" fill="#a9adaf"/></svg></button>
      <svg class="ml-[5px] h-4 w-1" viewBox="0 0 4 16"><path d="M2 0v16" stroke="#8d9295" stroke-width="3" stroke-dasharray="3 1"/></svg>
      <button aria-label="全部展开" class="ml-[18px]"><svg class="h-[18px] w-[17px]" viewBox="0 0 17 18"><path d="M1 2l2 2 1-3M1 8l2 2 1-3M1 14l2 2 1-3" fill="none" stroke="#999"/><path d="M6 1h11v4H6zM6 7h11v4H6zM6 13h11v4H6z" fill="#8bdcf5" stroke="#3a6f85"/></svg></button>
      <button aria-label="全部折叠" class="ml-2"><svg class="h-[18px] w-[11px]" viewBox="0 0 11 18"><path d="M1 2l2 2 1-3M1 8l2 2 1-3M1 14l2 2 1-3" fill="none" stroke="#999"/><path d="M6 1h4v4H6zM6 7h4v4H6zM6 13h4v4H6z" fill="#555" stroke="#999"/></svg></button>
      <button aria-label="列显示" class="ml-[8px] grid size-6 place-items-center border border-[#62676a] bg-[#33373a]"><svg class="size-4" viewBox="0 0 16 16"><path d="M1 1h14v12H1zM1 4h14M6 1v12M10 1v12" fill="#292d30" stroke="#505558"/><ellipse cx="11" cy="13" rx="4" ry="2.500" fill="#444" stroke="#666"/></svg></button>
      <span class="ml-1 h-6 w-px bg-[#53595c]"></span>
      <button aria-label="新建组" class="ml-[7px]"><svg class="size-[18px]" viewBox="0 0 18 18"><path d="M3 3l9-2v3l3 1v10l-6 2-6-2z" fill="#f7dba5" stroke="#8c7448" stroke-width=".8"/><path d="M9 7l5-2v10l-5 2z" fill="#fcefd2"/><path d="M4 0v8M0 4h8M1 1l6 6M7 1L1 7" stroke="#f59a22"/></svg></button>
      <span class="ml-[7px] h-6 w-px bg-[#53595c]"></span>
      <button aria-label="树过滤器" class="ml-[7px]"><svg class="size-[18px]" viewBox="0 0 18 18"><path d="M1 1h3v3H1zM1 13h3v3H1z" fill="#fff" stroke="#888"/><path d="M1 7h3v3H1z" fill="#4db8dc" stroke="#888"/><path d="M6 8h12l-4 4v5h-3v-5z" fill="#676c6f"/></svg></button>
      <button aria-label="树列" class="ml-[6px]"><svg class="size-[18px]" viewBox="0 0 18 18"><path d="M1 1h14v14H1z" fill="#eee" stroke="#277a9c"/><path d="M1 1h14v3H1z" fill="#4db8dc"/><path d="M2 5h3v10H2z" fill="#8bdcf5"/><path d="M8 8h7l2 2v7H8z" fill="#f7f7f7" stroke="#888"/><path d="M10 12h5M10 14h5" stroke="#777"/></svg></button>
      <span class="ml-[6px] h-6 w-px bg-[#53595c]"></span>
      <button aria-label="更多" class="ml-[6px]"><svg class="h-2 w-[11px]" viewBox="0 0 11 8"><path d="M1 0l3 4-3 4M6 0l3 4-3 4" fill="none" stroke="#666b6e" stroke-width="2.500"/></svg></button>
      <button aria-label="树设置" class="ml-2"><svg class="h-5 w-[18px]" viewBox="0 0 18 20"><path d="M1 1h10l4 4v13H1z" fill="#f7f7f7" stroke="#888"/><path d="M3 9h3v2H3zM3 13h3v2H3z" fill="none" stroke="#777"/><path d="M8 10h5M8 14h5M4 5h5" stroke="#999"/><path d="M18 17v3h-3z" fill="#999"/></svg></button>
    </div>
    <div class="flex h-[30px] shrink-0 items-center pl-[11px]">
      <svg class="h-4 w-[18px]" viewBox="0 0 18 16"><path d="M0 0h18v2l-6.500 6v8h-5V8L0 2z" fill="#e8e8e8" stroke="#777"/><path d="M9 3h7l-6 6v6H9z" fill="#aaa"/></svg>
      <label class="ml-[3px] flex h-[29px] w-[186px] items-center border border-[#626c6e] bg-[#191919]">
        <input type="text" aria-label="搜索模型树" class="min-w-0 flex-1 bg-transparent px-1 outline-none">
        <button aria-label="清除" class="mr-[5px]"><svg class="size-2" viewBox="0 0 8 8"><path d="M.5.500l7 7M7.500.500l-7 7" stroke="#999" stroke-width="1.200"/></svg></button>
      </label>
      <button aria-label="搜索选项" class="ml-[6px] text-[#8d9396]"><svg class="h-1 w-[7px]"><use href="#dn"/></svg></button>
      <button aria-label="添加" class="ml-3"><svg class="size-[11px]" viewBox="0 0 11 11"><path d="M5.500 0v11M0 5.500h11" stroke="#4d5356" stroke-width="3"/></svg></button>
    </div>
    <div class="mt-[5px] mr-[5px] mb-[6px] ml-2 flex min-h-0 flex-1 bg-[#1a2127]">
      <ul class="flex-1 overflow-hidden whitespace-nowrap [&>li]:flex [&>li]:h-[22px] [&>li]:items-center [&>li>button]:w-[14px] [&>li>button]:text-[#5c6062] [&>li>button>svg]:h-[9px] [&>li>button>svg]:w-2 [&>li>svg]:mr-1 [&>li>svg]:size-[18px] [&>li]:pl-2 [&>li.off]:pl-[22px] [&>li.off]:text-[#75684b] [&>li.leaf]:pl-[22px]">
        <li><svg class="-ml-[6px]"><use href="#cube"/></svg>扶手.PRT</li>
        <li><button aria-label="展开"><svg><use href="#rt"/></svg></button><svg><use href="#items"/></svg>设计项</li>
        <li class="leaf"><svg><use href="#planes"/></svg>RIGHT</li>
        <li class="leaf"><svg><use href="#planes"/></svg>TOP</li>
        <li class="leaf"><svg><use href="#planes"/></svg>FRONT</li>
        <li class="leaf"><svg><use href="#csys"/></svg>PRT_CSYS_DEF</li>
        <li class="off"><svg><use href="#cgeod"/></svg>外部复制几何 标识40</li>
        <li class="off"><svg><use href="#quiltd"/></svg>复制 1</li>
        <li class="leaf"><svg><use href="#solid"/></svg>实体化 1</li>
        <li class="off"><svg><use href="#cgeod"/></svg>外部复制几何 标识204</li>
        <li><button aria-label="展开"><svg><use href="#rt"/></svg></button><svg><use href="#extr"/></svg>拉伸 1</li>
        <li><button aria-label="展开"><svg><use href="#rt"/></svg></button><svg><use href="#extr"/></svg>拉伸 2</li>
        <li><button aria-label="展开"><svg><use href="#rt"/></svg></button><svg><use href="#extr"/></svg>拉伸 3</li>
        <li class="off"><svg><use href="#cgeod"/></svg>外部复制几何 标识1009</li>
        <li><button aria-label="展开"><svg><use href="#rt"/></svg></button><svg><use href="#extr"/></svg>拉伸 4</li>
        <li class="off"><svg><use href="#cgeod"/></svg>外部复制几何 标识1070</li>
        <li><button aria-label="展开"><svg><use href="#rt"/></svg></button><svg><use href="#extr"/></svg>拉伸 5</li>
        <li><button aria-label="展开"><svg><use href="#rt"/></svg></button><svg><use href="#extr"/></svg>拉伸 6</li>
        <li><button aria-label="展开"><svg><use href="#rt"/></svg></button><svg><use href="#extr"/></svg>拉伸 7</li>
        <li class="off"><svg><use href="#cgeod"/></svg>外部复制几何 标识1727</li>
        <li><button aria-label="展开"><svg><use href="#rt"/></svg></button><svg><use href="#extr"/></svg>拉伸 8</li>
        <li class="leaf"><svg><use href="#quilt"/></svg>复制 2</li>
        <li class="leaf"><svg><use href="#ofs1"/></svg>偏移 1</li>
        <li class="leaf"><svg><use href="#rem"/></svg>移除 1</li>
        <li class="leaf"><svg><use href="#rem"/></svg>移除 2</li>
        <li class="leaf"><svg><use href="#rnd"/></svg>倒圆角 1</li>
        <li><button aria-label="展开"><svg><use href="#rt"/></svg></button><svg><use href="#extr"/></svg>拉伸 9</li>
        <li class="off"><svg><use href="#cgeod"/></svg>外部复制几何 标识2779</li>
        <li class="off"><svg><use href="#quiltd"/></svg>复制 3</li>
        <li class="leaf"><svg><use href="#ofs2"/></svg>偏移 2</li>
        <li class="leaf"><svg><use href="#quilt"/></svg>复制 4</li>
        <li class="leaf"><svg><use href="#ext"/></svg>延伸 1</li>
        <li class="leaf"><svg><use href="#ext"/></svg>延伸 2</li>
        <li><button aria-label="展开"><svg><use href="#rt"/></svg></button><svg><use href="#extr"/></svg>拉伸 10</li>
      </ul>
      <div class="flex w-[15px] flex-col bg-[#333738] text-[#85898b]">
        <button aria-label="向上滚动" class="grid h-[15px] place-items-center border border-[#4b4f50] bg-[#222]"><svg class="h-1 w-[7px] rotate-180"><use href="#dn"/></svg></button>
        <div class="h-[372px] border border-[#5a5e5f] bg-[#202020]"></div>
        <button aria-label="向下滚动" class="mt-auto grid h-[15px] place-items-center border border-[#4b4f50] bg-[#222]"><svg class="h-1 w-[7px]"><use href="#dn"/></svg></button>
      </div>
    </div>
  </aside>

  <!-- Graphics window -->
  <div class="relative min-w-0 flex-1 bg-linear-to-b from-[#333366] to-[#a1a1b9]">
    <svg class="h-full w-full" viewBox="269 170 1651 835" role="img" aria-label="扶手模型">
      <defs>
        <linearGradient id="face" gradientUnits="userSpaceOnUse" x1="1100" y1="344" x2="1516" y2="460">
          <stop offset="0" stop-color="#595959"/><stop offset=".45" stop-color="#5f5f5f"/><stop offset=".62" stop-color="#6b6b6b"/><stop offset=".71" stop-color="#7c7c7c"/><stop offset=".76" stop-color="#c4c4c4"/><stop offset=".785" stop-color="#e2e2e2"/><stop offset=".81" stop-color="#b8b8b8"/><stop offset=".845" stop-color="#7c7c7c"/><stop offset="1" stop-color="#6c6c6c"/>
        </linearGradient>
        <linearGradient id="spike" gradientUnits="userSpaceOnUse" x1="1345" y1="640" x2="1397" y2="568"><stop offset="0" stop-color="#5b5b5b"/><stop offset=".5" stop-color="#858585"/><stop offset="1" stop-color="#eee9e2"/></linearGradient>
        <linearGradient id="pocket" gradientUnits="userSpaceOnUse" x1="920" y1="0" x2="1148" y2="0"><stop offset="0" stop-color="#808d99"/><stop offset=".65" stop-color="#86929e"/><stop offset=".8" stop-color="#8f9bab"/><stop offset="1" stop-color="#959fb0"/></linearGradient>
        <linearGradient id="round" gradientUnits="userSpaceOnUse" x1="1440" y1="480" x2="1465" y2="520"><stop offset="0" stop-color="#68737d"/><stop offset="1" stop-color="#a4b1bf"/></linearGradient>
      </defs>
      <g stroke="#0b0b0b" stroke-width="1.200" stroke-linejoin="round" fill="none">
        <path d="M692 747Q693 735 700 729L720 708L785 643Q815 615 847 592Q883 566 920 547Q946 535 970 528Q1000 520 1027 516L1090 507Q1130 502 1160 496Q1207 486 1253 466L1320 439Q1367 420 1403 414Q1450 408 1513 405L1535 407Q1522 437 1517 467Q1508 510 1513 557L1517 570L1514 577L1503 577Q1460 590 1433 610Q1400 640 1367 680L1330 715Q1300 746 1263 768L1239 782L1227 775L1217 778Q1160 808 1100 827Q1040 836 957 831Q890 823 823 807L747 785L710 773Q692 765 692 747Z" fill="#666"/>
        <path d="M702 757Q700 738 708 729L732 708L795 648Q823 622 853 599Q883 576 913 558Q938 544 963 536Q1000 524 1090 508L1160 498Q1209 488 1253 468L1320 441Q1367 422 1403 416Q1450 410 1513 406L1486 537L1440 548L1397 567L1337 688L1228 772L1217 778L823 802L715 772Q704 768 702 757Z" fill="url(#face)"/>
        <path d="M697 732L708 730M716 708L732 708M823 802L823 807" />
        <path d="M1228 772L823 800L716 771L706 760L760 690L900 620L1203 638L1250 627L1290 587L1330 525L1380 478L1374 511L1390 525L1402 552L1396 568L1360 575L1337 688Z" fill="#595959" stroke="none"/>
        <path d="M704 750Q702 738 709 731L733 709L796 649Q824 623 854 600Q884 577 914 559Q939 545 964 537Q1000 527 1088 510" stroke="#9aa5b0" stroke-width="1"/>
        <path d="M714 774L823 804Q890 822 957 830" stroke="#3b3d3d" stroke-width="3"/>

        <!-- lower right face and flange -->
        <path d="M1486 537L1506 566Q1447 582 1413 610L1337 688Q1350 625 1397 568L1439 548Q1462 540 1486 537Z" fill="#595959"/>
        <path d="M1513 405L1535 407Q1522 437 1517 467Q1508 510 1513 557L1517 570L1514 577L1506 566L1486 537Z" fill="#5b5b5b"/>
        <path d="M1360 575L1370 583L1397 567L1397 573Q1345 630 1337 687Z" fill="url(#spike)"/>
        <path d="M1382 471L1374 510"/>
        <path d="M1507 573L1503 577Q1460 590 1433 610Q1400 640 1367 680L1330 715Q1300 746 1263 768L1239 782L1230 774Q1290 745 1333 706L1373 666Q1430 596 1507 573Z" fill="#555"/>
        <path d="M1228 772L1260 752Q1300 726 1337 688L1380 642Q1430 592 1480 572L1505 566L1507 573Q1460 584 1433 608L1373 668L1333 708Q1300 743 1267 762L1237 778Z" fill="#a3b0fb" stroke="none"/>
        <path d="M1234 777Q1300 738 1334 703L1377 660Q1430 600 1480 579L1506 572L1507 576Q1460 587 1433 606L1372 669L1332 709Q1300 743 1267 761L1239 778Z" fill="#8793d6" stroke-width="1"/>
        <path d="M1506 566L1509 558L1514 560L1517 570M1503 577L1510 566"/>

        <!-- long groove -->
        <path d="M1382 471Q1352 482 1333 502Q1310 528 1287 562L1267 590Q1244 620 1207 626L1148 627L1097 622L930 606L957 620L1013 627L1097 632L1203 637Q1240 637 1270 612Q1283 600 1307 558Q1325 525 1350 502L1381 479Z" fill="#a2b0be"/>
        <path d="M1353 494Q1325 515 1307 547L1280 587Q1258 618 1220 630Q1255 622 1275 602Q1293 580 1311 548Q1328 518 1356 494Z" fill="#555"/>
        <path d="M1353 494L1382 474"/>

        <!-- pocket -->
        <path d="M918 595Q919 580 940 567Q960 556 1000 550Q1040 545 1090 547Q1130 549 1147 558L1149 628Q1020 625 957 620Q918 615 918 595Z" fill="url(#pocket)"/>
        <path d="M940 571Q970 556 1030 552L1130 553L1146 559L1057 560Q985 561 940 571Z" fill="#5d6873" stroke="none"/>
        <path d="M1000 557Q1040 552 1090 553L1146 559L1057 560Z" fill="#8b97a3" stroke="none"/>
        <path d="M935 574Q980 560 1057 560L1147 559M937 572Q975 553 1070 552Q1120 551 1147 559M1070 553Q1067 590 1073 625M1097 549Q1093 590 1098 627M930 610L1070 622L1160 626M935 615Q1000 622 1160 631M1147 558V628"/>
        <path d="M1147 562V628" stroke-width="2"/>
        <path d="M1089 508L1090 548" stroke="#93a0ad" stroke-width="3"/><path d="M1088 508L1088 548M1091 526L1091 548"/>
        <path d="M930 570Q960 550 1088 549" stroke="#8996a3" stroke-width="2"/>

        <!-- lower panel -->
        <path d="M823 802L877 715Q882 704 893 704Q903 704 912 711Q925 718 937 713Q942 709 947 703L967 677Q976 665 987 665Q996 665 1003 672L1077 740Q1095 757 1117 757Q1140 754 1155 744Q1170 738 1184 745L1227 773L1217 778Q1160 808 1100 827Q1040 834 957 830Q890 822 823 802Z" fill="#84919d"/>
        <path d="M882 708Q893 703 904 709Q920 721 937 714M968 679Q980 665 1000 674L1075 744Q1095 760 1117 759Q1140 756 1157 746Q1170 742 1182 747L1226 774" stroke="#48525b" stroke-width="3"/>
        <path d="M825 800L879 714Q888 709 898 713Q920 728 937 716L967 680Q978 669 993 677L1070 745Q1093 763 1117 763Q1140 759 1155 750Q1168 746 1177 750L1217 778M993 677L998 671M1070 745L1077 741M898 713L901 708M1133 760V755M1177 750L1180 743" stroke-width="1"/>
        <ellipse cx="945.500" cy="684.500" rx="10.500" ry="12" fill="#84919d"/><ellipse cx="963" cy="655.500" rx="6.500" ry="7" fill="#84919d"/><ellipse cx="1313" cy="691" rx="11.500" ry="12" fill="#84919d"/>
        <path d="M1304 683Q1300 692 1305 699"/>
        <g stroke-width="1"><circle cx="946" cy="684" r="1"/><circle cx="963.500" cy="655.500" r="1"/><circle cx="1314" cy="691" r="1"/><circle cx="999" cy="748" r="1"/><circle cx="1005" cy="759" r="1"/><circle cx="1015" cy="753" r="1"/></g>

        <!-- bosses and ribs -->
        <path d="M1356 516L1387 507L1392 537L1363 546Z" fill="#84919d"/><path d="M1387 507L1391 528L1392 537"/>
        <g stroke-width="1"><circle cx="1363" cy="521" r="1.200"/><circle cx="1384" cy="523" r="1.200"/><circle cx="1367" cy="538" r="1.200"/></g>
        <path d="M1370 583L1407 553L1432 536L1397 567Z" fill="#9aa7b4"/>
        <path d="M1420 467L1448 487L1435 486Q1445 500 1443 517L1432 534L1412 503Z" fill="#84919d"/>
        <path d="M1435 486L1448 487Q1471 500 1470 508L1463 518L1443 520Q1446 500 1435 486Z" fill="url(#round)"/>
        <path d="M1443 520L1463 518L1453 533L1432 535Z" fill="#a0adbb"/>
        <path d="M1420 467L1448 487L1435 486Z" fill="#6d7882"/>
        <path d="M1396 488L1412 503L1433 534L1410 552L1392 525Q1390 508 1396 488Z" fill="#84919d"/>
        <path d="M1412 503L1429 536M1396 490L1428 535M1392 527L1406 553"/>
        <path d="M1432 536L1453 533L1440 550L1406 586L1397 573L1397 567Z" fill="#8b98a5"/>
        <path d="M1432 536L1405 584L1440 550L1453 533Z" fill="#93a0ad"/>
        <path d="M1433 534H1453" stroke-width="2.500"/>
      </g>
      <!-- spin centre -->
      <g fill="none" stroke-width="1.500"><path d="M1117 604L1106 605" stroke="#f33"/><path d="M1117 604L1098 614" stroke="#3ff"/><path d="M1117 604L1127 627" stroke="#3f3"/></g>
      <circle cx="1106" cy="605" r="2" fill="#f33"/><circle cx="1098" cy="614" r="3" fill="#3ff"/><circle cx="1127" cy="627" r="2.300" fill="#3f3"/>
    </svg>

    <!-- In-graphics toolbar -->
    <div class="absolute inset-x-0 top-[7px] flex justify-center">
      <div class="flex h-8 items-center border border-[#666b6d] bg-[#1a2127] pr-[3px] pl-[2px] [&>button]:grid [&>button]:h-6 [&>button]:w-[26px] [&>button]:place-items-center [&>button>svg]:size-[18px]">
        <button aria-label="重新调整"><svg viewBox="0 0 18 18"><path d="M1 1h16v16H1z" fill="#f4f4f4" stroke="#999"/><path d="M1 1h16v2H1z" fill="#bbb"/><circle cx="9" cy="9" r="4.500" fill="#d4f3fb" stroke="#3a7f9b" stroke-width="1.200"/><path d="M12.500 12.500L17 17" stroke="#999" stroke-width="2.500"/></svg></button>
        <button aria-label="放大"><svg viewBox="0 0 18 18"><path d="M10 10l7 7" stroke="#aaa" stroke-width="3"/><circle cx="6.500" cy="6.500" r="5.500" fill="#e6f9fe" stroke="#8bc" stroke-width="1.500"/><path d="M3.500 6.500h6M6.500 3.500v6" stroke="#14638a" stroke-width="2.200"/></svg></button>
        <button aria-label="缩小"><svg viewBox="0 0 18 18"><path d="M10 10l7 7" stroke="#aaa" stroke-width="3"/><circle cx="6.500" cy="6.500" r="5.500" fill="#e6f9fe" stroke="#8bc" stroke-width="1.500"/><path d="M3.500 6.500h6" stroke="#14638a" stroke-width="2.200"/></svg></button>
        <button aria-label="重画"><svg viewBox="0 0 18 18"><path d="M1 1h16v16H1z" fill="#f0f8fa" stroke="#999"/><path d="M2 16.500Q12 14 16.500 5v11.500z" fill="#9fd9ea"/><path d="M8 13L15 6" stroke="#256f8c" stroke-width="1.500"/><path d="M1 1h16v2H1z" fill="#aaa"/></svg></button>
        <button aria-label="着色"><svg viewBox="0 0 18 18"><path d="M7 4l3-3h7v8l-3 3H7z" fill="#e4e4e4"/><path d="M14 4l3-3v8l-3 3z" fill="#8b8b8b"/><path d="M8 12h6v5H8z" fill="#aaa"/><circle cx="5.500" cy="10" r="5" fill="url(#gs)"/><path d="M18 15v3h-3z" fill="#999"/></svg></button>
        <button aria-label="显示样式"><svg viewBox="0 0 18 18"><path d="M1 5l4-4h12v10l-4 5H1z" fill="#8bdcf5" stroke="#e6f9fe" stroke-width=".8"/><path d="M1.500 5h11v11h-11z" fill="#e4f7fc" stroke="#1f6f96" stroke-width="1.500"/><path d="M13 5l4-4" stroke="#1f6f96"/><path d="M18 15v3h-3z" fill="#999"/></svg></button>
        <button aria-label="已保存方向"><svg viewBox="0 0 18 18"><path d="M1 9l4-7h8l3 4v9l-8 1H5z" fill="#a8e2f4" stroke="#79a"/><path d="M1 9h9l4-7M10 9v7" fill="none" stroke="#1f6f96"/><path d="M11 9h6v8h-6z" fill="#f4f4f4" stroke="#888"/><path d="M12.500 12h3M12.500 14h3" stroke="#777"/></svg></button>
        <button aria-label="视图管理器"><svg viewBox="0 0 18 18"><path d="M1 1h14v14H1z" fill="#f4f4f4" stroke="#999"/><path d="M3 4h2m2 0h6M3 7h2m2 0h6M3 10h2m2 0h3M3 13h2" stroke="#777"/><path d="M7 10h11v7H7z" fill="#555" stroke="#aaa"/><circle cx="12.500" cy="13.500" r="2.300" fill="#ddd" stroke="#222"/></svg></button>
        <button aria-label="透视图"><svg viewBox="0 0 18 18"><path d="M1 5l10-4 6 2-2 12-6 2-7-5z" fill="#8bcbe0" stroke="#79a"/><path d="M1 5l8 2 8-4M9 7v10" fill="none" stroke="#d4f3fb"/><path d="M2 6l7 2v8l-6-4z" fill="#c8eef8"/></svg></button>
        <button aria-label="截面"><svg viewBox="0 0 18 18"><path d="M4 3h12L2 14z" fill="#d4f3fb" stroke="#888"/><path d="M17 3l-1 10-3 3H2z" fill="#333" stroke="#777"/><path d="M5 15l11-8M8 15l8-5" stroke="#888"/><path d="M1 16L17 2" stroke="#2c86ab"/><path d="M18 15v3h-3z" fill="#999"/></svg></button>
        <button aria-label="基准显示过滤器"><svg viewBox="0 0 18 18"><path d="M1 1l4 4m0-4L1 5M11 1L8 8M3 12l4-3 1 4-4 3zM9 8l2 3 5-1-2 4H9l-2 3" fill="none" stroke="#8b6f42" stroke-width="1.600"/><path d="M18 15v3h-3z" fill="#999"/></svg></button>
        <button aria-label="注释显示" class="border border-[#666b6d] bg-[#33373a]"><svg viewBox="0 0 18 18"><path d="M1 2h10v6H1z" fill="#fdf1d2" stroke="#8c7448" stroke-width=".7"/><path d="M12 5h4v4M8 10h3" fill="none" stroke="#666"/><ellipse cx="12" cy="13.500" rx="5" ry="3" fill="#666"/><circle cx="12" cy="13.500" r="1.500" fill="#fff" stroke="#222"/></svg></button>
        <button aria-label="旋转中心" class="border border-[#666b6d] bg-[#33373a]"><svg viewBox="0 0 18 18"><path d="M4 4l4 5h6M8 9l-4 5" fill="none" stroke="#777" stroke-width="1.500"/><circle cx="4" cy="3.500" r="2.500" fill="#6a9f5d"/><circle cx="15" cy="9" r="2.500" fill="#ef6a5b"/><circle cx="4" cy="14.500" r="2.500" fill="#2f7fa0"/></svg></button>
        <button aria-label="仿真"><svg viewBox="0 0 18 18"><path d="M8 2l7 13H1zM8 7l3 6H5z" fill="none" stroke="#54595c" stroke-width="1.500"/><circle cx="13.500" cy="13.500" r="3" fill="#1a2127" stroke="#54595c"/></svg></button>
        <button aria-label="暂停"><svg viewBox="0 0 18 18"><path d="M4 3h3v12H4zM11 3h3v12h-3z" fill="#4c5154"/></svg></button>
        <button aria-label="结果"><svg viewBox="0 0 18 18"><path d="M1 4h16v10H5c3-2 3-5-4-5z" fill="#4c5154"/><path d="M12 4h5v10h-5z" fill="#3a3f42"/></svg></button>
      </div>
    </div>
  </div>
</main>

<!-- Status bar -->
<footer class="relative flex h-[35px] shrink-0 items-center border-t border-[#5f6668] bg-[#192827]">
  <button aria-label="切换导航器" class="ml-[6px] grid size-[23px] place-items-center border border-[#7b8183] bg-[#33373a]"><svg class="size-[17px]" viewBox="0 0 17 17"><path d="M1 1h15v15H1z" fill="#f0f0f0" stroke="#888"/><path d="M1 3.500h15" stroke="#999"/><path d="M5.500 4v12" stroke="#277a9c"/><ellipse cx="12" cy="13.500" rx="4.500" ry="3" fill="#ddd" stroke="#444"/><circle cx="12" cy="13.500" r="1.500" fill="#222"/></svg></button>
  <button aria-label="浏览器" class="ml-[5px]"><svg class="size-[18px]" viewBox="0 0 18 18"><circle cx="9" cy="9" r="7" fill="#2f96c4"/><path d="M4 5c3-3 7-2 8 0s-3 3-4 6-4 0-4-6z" fill="#b7e6f5"/><ellipse cx="9" cy="9" rx="10" ry="4.500" fill="none" stroke="#aaa" stroke-width="1.200" transform="rotate(-50 9 9)"/></svg></button>
  <button aria-label="全屏" class="ml-2"><svg class="size-[18px]" viewBox="0 0 18 18"><path d="M1 1h16v16H1z" fill="url(#gw)" stroke="#2c86ab" stroke-width="1.500"/></svg></button>
  <span class="ml-[10px] h-6 w-px bg-[#5b6264]"></span>
  <span class="ml-[5px] size-[7px] rounded-full bg-[#17688c]"></span>
  <p class="ml-2 text-[11px] leading-4">将显示带边着色的模型</p>
  <div class="mr-[18px] ml-auto flex items-center">
    <span class="mr-1 h-7 w-px bg-[#4b5254]"></span><span class="mr-[2px] h-7 w-px bg-[#4b5254]"></span>
    <div class="flex h-6 w-[42px] items-center border border-[#5f6568] bg-[#222324]">
      <button aria-label="查找" class="grid h-full w-[27px] place-items-center border-r border-[#5f6568]"><svg class="size-[18px]"><use href="#bino"/></svg></button>
      <button aria-label="查找选项" class="grid flex-1 place-items-center text-[#8d9396]"><svg class="h-1 w-[7px]"><use href="#dn"/></svg></button>
    </div>
    <span class="mr-[97px] ml-[2px] h-7 w-px bg-[#4b5254]"></span>
    <select aria-label="选择过滤器" class="h-[25px] w-[177px] border border-[#5f6568] bg-[#1f1f1f] text-[#dfe2e3]"><option></option></select>
  </div>

  <!-- Input method bar and forum mark over the window -->
  <div class="absolute right-[2px] bottom-[2px] flex h-6 w-[163px] items-center justify-between border border-[#b9c6cc] bg-white pr-1 pl-[29px] font-bold text-[#2a78c4]">
    <span class="text-[15px] leading-5">中</span>
    <svg class="size-4" viewBox="0 0 16 16"><path d="M10 2a6.500 6.500 0 11-8 8c5 1 9-3 8-8z" fill="#2a78c4"/></svg>
    <svg class="size-4" viewBox="0 0 16 16"><circle cx="5" cy="5" r="2" fill="none" stroke="#2a78c4" stroke-width="1.500"/><path d="M11 8a2 2 0 01-2 5" fill="none" stroke="#2a78c4" stroke-width="2.500"/></svg>
    <svg class="size-4" viewBox="0 0 16 16"><path d="M1 2h14v12H1z" fill="none" stroke="#2a78c4" stroke-width="1.600"/><path d="M3 5h10M3 8h10" stroke="#2a78c4" stroke-dasharray="2 1.300" stroke-width="1.500"/><path d="M4 11h8" stroke="#2a78c4" stroke-width="1.500"/></svg>
    <span class="relative">
      <svg class="size-4" viewBox="0 0 16 16"><circle cx="7" cy="5" r="4" fill="#2a78c4"/><path d="M0 14c1-7 12-7 13 0z" fill="#2a78c4"/></svg>
      <span class="absolute right-0 bottom-0 bg-white px-px text-[9px] leading-[8px]">10</span>
    </span>
    <svg class="size-4" viewBox="0 0 16 16"><path d="M5 2c1 2 5 2 6 0l5 3-2 3-2-1v7H4V7L2 8 0 5z" fill="#2a78c4"/></svg>
    <svg class="size-4" viewBox="0 0 16 16"><path d="M2 14l7-7" stroke="#2a78c4" stroke-width="3"/><path d="M15 5a4 4 0 11-4-4L10 4l2 2z" fill="#2a78c4"/></svg>
  </div>
  <svg class="absolute right-[158px] bottom-[2px] size-7" viewBox="0 0 28 28"><path d="M2 4l20-3q3 0 3.500 3L28 22q0 3-3 3.500L8 28q-4 0-4.500-3L1 8q-.500-3 1-4z" fill="#f4511e"/><path d="M21 8c-6-3-13-1-12 3s13 1 12 6-10 4-14 1" fill="none" stroke="#fff" stroke-width="3"/></svg>
  <div class="pointer-events-none absolute right-[22px] bottom-[26px] flex items-end font-['Noto_Sans_CJK_SC',sans-serif] text-[40px] leading-[44px] font-light italic">
    <span class="text-[#ff6a3c]">野火</span><span class="ml-1 text-black">论坛</span>
  </div>
  <svg class="pointer-events-none absolute right-[103px] bottom-[42px] h-[42px] w-5" viewBox="0 0 20 42"><path d="M5 0c9 8 15 18 11 28-2 7-7 10-9 13l-5-3c6-6 6-12 4-20l-5-9c4 2 7 5 9 8 0-6-2-11-4-17z" fill="#ff6a3c"/></svg>
  <p class="pointer-events-none absolute right-[24px] bottom-[7px] font-['DejaVu_Sans',sans-serif] text-[15px] leading-5 text-[#777e80] italic">www.proewildfire.cn</p>
</footer>
</body>
</html>
